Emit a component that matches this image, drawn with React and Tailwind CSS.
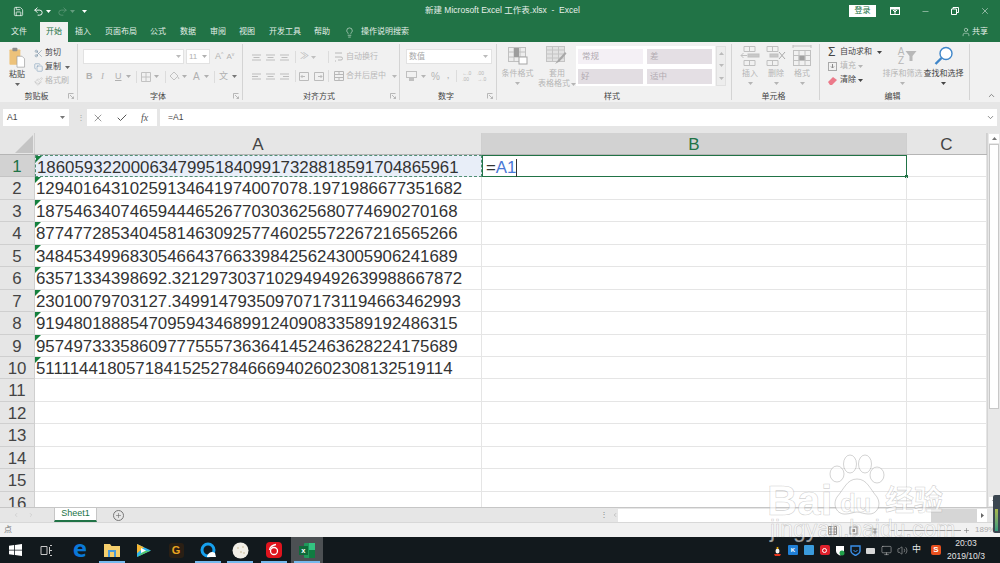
import React from "react";
import { Scissors, Copy, Paintbrush, Lightbulb, Minus, X, Check, ChevronDown, ChevronUp, ChevronLeft, ChevronRight, Plus, User, Save, Undo2, Redo2, Volume2, Monitor } from "lucide-react";

const rows = [
  "186059322000634799518409917328818591704865961",
  "12940164310259134641974007078.1971986677351682",
  "187546340746594446526770303625680774690270168",
  "877477285340458146309257746025572267216565266",
  "348453499683054664376633984256243005906241689",
  "63571334398692.3212973037102949492639988667872",
  "23010079703127.3499147935097071731194663462993",
  "919480188854709594346899124090833589192486315",
  "957497333586097775557363641452463628224175689",
  "511114418057184152527846669402602308132519114",
  "", "", "", "", "", "",
];

const Caret = ({ className = "" }) => (
  <svg width="5" height="3" viewBox="0 0 5 3" className={className}><path d="M0 0h5L2.5 3z" fill="currentColor" /></svg>
);

const Launcher = () => (
  <svg width="6" height="6" viewBox="0 0 6 6" className="text-[#a8a8a8]"><path d="M0.5 5.5V0.5H5.5M2 2L5.5 5.5M3.5 5.5H5.5V3.5" fill="none" stroke="currentColor" strokeWidth="0.8" /></svg>
);

function Group({ w, label, launcher, children, border = true }) {
  return (
    <div className={`flex flex-col h-[56px] mt-[2px] shrink-0 pt-[1px] ${border ? "border-r border-[#d4d4d4]" : ""}`} style={{ width: w }}>
      <div className="flex-1 flex min-h-0">{children}</div>
      <div className="h-[12px] -mb-[3px] flex items-center justify-center relative text-[8px] text-[#444] pr-1">
        {label}
        {launcher && <span className="absolute right-[3px] top-[2px]"><Launcher /></span>}
      </div>
    </div>
  );
}

const Lines = ({ kind, className = "" }) => {
  const x = kind === "l" ? [0, 9, 0, 6] : kind === "r" ? [0, 9, 3, 9] : [0, 9, 1.5, 7.5];
  return (
    <svg width="9" height="7" viewBox="0 0 9 7" className={`text-[#bdbdbd] ${className}`}>
      <path d={`M${x[0]} 1H${x[1]}M${x[2]} 3.5H${x[3]}M${x[0]} 6H${x[1]}`} stroke="currentColor" strokeWidth="1" fill="none" />
    </svg>
  );
};

const BigBtn = ({ w, icon, l1, l2, caret = true, color = "text-[#b5b5b5]" }) => (
  <div className={`flex flex-col items-center shrink-0 text-[8px] leading-[10px] ${color}`} style={{ width: w }}>
    <div className="h-[22px] flex items-center justify-center">{icon}</div>
    <div className="mt-[2px] whitespace-nowrap">{l1}</div>
    {l2 && <div className="whitespace-nowrap flex items-center gap-[1px]">{l2}<Caret /></div>}
    {!l2 && caret && <Caret className="mt-[3px]" />}
  </div>
);

const TableIcon = () => (
  <svg width="20" height="18" viewBox="0 0 20 18" className="text-[#c0c0c0]">
    <rect x="0.5" y="0.5" width="17" height="14" fill="#ededed" stroke="currentColor" />
    <path d="M6 1v14M12 1v14M1 5h16M1 10h16" stroke="currentColor" fill="none" />
    <rect x="6" y="1" width="5" height="9" fill="#9d9d9d" />
    <rect x="11" y="10" width="8" height="7" fill="#fff" stroke="#a5a5a5" />
  </svg>
);

const SheetFmtIcon = () => (
  <svg width="22" height="20" viewBox="0 0 22 20" className="text-[#c4c4c4]">
    <rect x="0.5" y="0.5" width="18" height="15" fill="#e2e2e2" stroke="currentColor" />
    <path d="M1 4h18M1 8h18M1 12h18M6.5 1v15M12.5 1v15" stroke="currentColor" fill="none" />
    <path d="M9 18l3-4 7-8 1.5 1.5-7 8z" fill="#a8a8a8" />
  </svg>
);

const CellsIcon = ({ kind }) => (
  <svg width="20" height="22" viewBox="0 0 20 22" className="text-[#c0c0c0]" fill="none" stroke="currentColor">
    {kind === "ins" && <><path d="M4 1.500h11v5H4zM9.500 1.500v5M4 15.500h11v5H4zM9.500 15.500v5" /><rect x="8" y="9" width="11" height="3" fill="#c8c8c8" /><path d="M7 10.500H1M3.500 8l-2.500 2.500 2.500 2.500" /></>}
    {kind === "del" && <><path d="M1 1.500h11v5H1zM6.500 1.500v5M1 15.500h11v5H1zM6.500 15.500v5" /><rect x="4" y="9" width="8" height="3" fill="#c8c8c8" /><path d="M13 7l6 7M19 7l-6 7" stroke="#a9a9a9" /></>}
    {kind === "fmt" && <><path d="M1 1h18M1 0v3M19 0v3" /><rect x="1.500" y="5.500" width="17" height="15" /><path d="M7 6v14M13 6v14M2 10.500h16M2 15.500h16" /><rect x="7" y="10.500" width="6" height="5" fill="#a0a0a0" /></>}
  </svg>
);

const GreyBtn = ({ children, className = "" }) => <span className={`text-[#b8b8b8] flex items-center whitespace-nowrap ${className}`}>{children}</span>;
const Sep = ({ className = "" }) => <span className={`w-[1px] h-[12px] bg-[#dcdcdc] shrink-0 ${className}`} />;

function Ribbon() {
  return (
    <div className="h-[60px] bg-[#f1f1f1] flex shrink-0">
      <Group w={78} label="剪贴板" launcher>
        <div className="w-[34px] shrink-0 flex flex-col items-center pt-[2px] text-[#444] text-[8px] leading-[10px]">
          <svg width="18" height="21" viewBox="0 0 20 25" className="mr-[1px]">
            <rect x="1" y="3" width="13" height="18" rx="1" fill="#edc27a" />
            <rect x="4.500" y="1" width="6" height="4" rx="1" fill="#8f8f8f" />
            <path d="M10 11h6l3 3v10h-9z" fill="#fff" stroke="#9a9a9a" strokeWidth="0.8" />
          </svg>
          <div className="mt-[2px]">粘贴</div>
          <Caret className="mt-[3px] text-[#666]" />
        </div>
        <div className="flex flex-col text-[8px] text-[#444] leading-[14px] pt-[1px]">
          <div className="flex items-center gap-[2px] h-[14px]"><Scissors size={9} strokeWidth={1.2} className="text-[#56748f]" />剪切</div>
          <div className="flex items-center gap-[2px] h-[14px]"><Copy size={9} strokeWidth={1.2} className="text-[#5f87ad]" />复制<Caret className="ml-[2px] text-[#666]" /></div>
          <div className="flex items-center gap-[2px] h-[14px] text-[#b5b5b5]"><Paintbrush size={9} strokeWidth={1.2} />格式刷</div>
        </div>
      </Group>

      <Group w={165} label="字体" launcher>
        <div className="flex flex-col pl-[5px] pt-[4px] w-full">
          <div className="flex items-center h-[15px]">
            <div className="w-[101px] h-[15px] bg-white border border-[#e2e2e2] flex items-center justify-end pr-[2px] text-[#bbb]"><Caret /></div>
            <div className="ml-[2px] w-[24px] h-[15px] bg-white border border-[#e2e2e2] flex items-center justify-between px-[2px] text-[8px] text-[#b0b0b0]">11<Caret /></div>
            <span className="ml-[5px] text-[9px] text-[#b0b0b0]">A<sup className="text-[5px]">^</sup></span>
            <span className="ml-[3px] text-[8px] text-[#b0b0b0]">A<sup className="text-[5px]">v</sup></span>
          </div>
          <div className="flex items-center h-[15px] mt-[5px] text-[9px] text-[#b0b0b0] pl-[3px]">
            <b className="w-[15px]" style={{ fontFamily: "Liberation Sans" }}>B</b>
            <i className="w-[14px]" style={{ fontFamily: "Liberation Serif" }}>I</i>
            <u className="w-[10px]">U</u>
            <Caret className="ml-[1px]" />
            <Sep className="ml-[5px] mr-[4px]" />
            <svg width="10" height="10" viewBox="0 0 10 10" className="text-[#c2c2c2]"><path d="M.5.5h9v9h-9zM5 .5v9M.5 5h9" fill="none" stroke="currentColor" /></svg>
            <Caret className="ml-[3px]" />
            <Sep className="ml-[6px] mr-[3px]" />
            <svg width="11" height="11" viewBox="0 0 11 11" className="text-[#c2c2c2]"><path d="M5 1l4 4-4 4-4-4zM9 6l1 2" fill="none" stroke="currentColor" /></svg>
            <Caret className="ml-[2px]" />
            <span className="ml-[6px] text-[10px] leading-none w-[7px]">A</span>
            <Caret className="ml-[4px]" />
            <Sep className="ml-[5px] mr-[4px]" />
            <span className="text-[9px]">文</span>
            <Caret className="ml-[4px] text-[#777]" />
          </div>
        </div>
      </Group>

      <Group w={157} label="对齐方式" launcher>
        <div className="flex flex-col pl-[9px] pt-[5px] w-full">
          <div className="flex items-center h-[14px]">
            <Lines kind="c" /><Lines kind="c" className="ml-[5px]" /><Lines kind="c" className="ml-[5px]" />
            <Sep className="ml-[6px]" />
            <GreyBtn className="text-[9px] ml-[4px] w-[9px]">≫</GreyBtn><Caret className="text-[#c0c0c0] ml-[2px]" />
            <Sep className="ml-[12px]" />
            <GreyBtn className="text-[8px] gap-[3px] ml-[5px]">
              <svg width="9" height="10" viewBox="0 0 9 10"><path d="M1 1h7M1 5h6a1.500 1.500 0 010 3H4M1 9h1" stroke="currentColor" fill="none" /></svg>自动换行
            </GreyBtn>
          </div>
          <div className="flex items-center h-[14px] mt-[5px]">
            <Lines kind="l" /><Lines kind="c" className="ml-[5px]" /><Lines kind="r" className="ml-[5px]" />
            <Sep className="ml-[6px]" />
            <svg width="10" height="9" viewBox="0 0 10 9" className="text-[#bbb] ml-[3px]"><path d="M.5.5h9v8h-9zM2 4.500h4M2 4.500l1.500-1.500M2 4.500l1.500 1.500" fill="none" stroke="currentColor" /></svg>
            <svg width="10" height="9" viewBox="0 0 10 9" className="text-[#bbb] ml-[5px]"><path d="M.5.5h9v8h-9zM8 4.500H4M8 4.500L6.500 3M8 4.500L6.500 6" fill="none" stroke="currentColor" /></svg>
            <Sep className="ml-[4px]" />
            <GreyBtn className="text-[8px] gap-[2px] ml-[5px]">
              <svg width="10" height="10" viewBox="0 0 10 10"><path d="M.5.5h9v9h-9zM.5 3.500h9M.5 6.500h9M5 .5v3M5 6.500v3" stroke="currentColor" fill="none" /></svg>合并后居中<Caret className="ml-[4px]" />
            </GreyBtn>
          </div>
        </div>
      </Group>

      <Group w={97} label="数字" launcher>
        <div className="flex flex-col pl-[6px] pt-[4px]">
          <div className="w-[86px] h-[15px] bg-white border border-[#e2e2e2] flex items-center justify-between pl-[2px] pr-[3px] text-[8px] text-[#a8a8a8]">数值<Caret className="text-[#bbb]" /></div>
          <div className="flex items-center h-[14px] mt-[5px] text-[#b5b5b5] text-[10px]">
            <svg width="12" height="11" viewBox="0 0 12 11" className="text-[#c0c0c0]"><rect x=".5" y=".5" width="10" height="6" fill="none" stroke="currentColor" /><rect x="3" y="7" width="5" height="3" fill="currentColor" /></svg>
            <Caret className="ml-[3px]" />
            <span className="ml-[5px]">%</span>
            <b className="ml-[7px] text-[8px]">,</b>
            <Sep className="ml-[7px] mr-[5px]" />
            <span className="text-[5px] leading-[6px] w-[14px]">←.0<br />.00</span>
            <span className="text-[5px] leading-[6px] ml-[1px]">.00<br />→.0</span>
          </div>
        </div>
      </Group>

      <Group w={235} label="样式">
        <BigBtn w={41} icon={<TableIcon />} l1="条件格式" />
        <BigBtn w={38} l2="表格格式" icon={<SheetFmtIcon />} l1="套用" />
        <div className="w-[139px] h-[40px] bg-white mt-[1px] grid grid-cols-[65px_65px] gap-x-[4px] gap-y-[4px] p-[2px] pt-[3px] text-[8.500px] text-[#b2abb2]">
          <div className="bg-[#f4f0f5] h-[15px] flex items-center pl-[4px]">常规</div>
          <div className="bg-[#e4dfe4] h-[15px] flex items-center pl-[3px]">差</div>
          <div className="bg-[#e2dde2] h-[15px] flex items-center pl-[3px]">好</div>
          <div className="bg-[#e4dfe4] h-[15px] flex items-center pl-[3px]">适中</div>
        </div>
        <div className="w-[10px] h-[40px] mt-[1px] ml-[1px] flex flex-col border border-[#e0e0e0] bg-[#ededed] text-[#bbb] items-center justify-around"><Caret className="rotate-180" /><Caret /><Caret /></div>
      </Group>

      <Group w={88} label="单元格">
        <div className="w-[5px]" />
        <BigBtn w={26} icon={<CellsIcon kind="ins" />} l1="插入" />
        <BigBtn w={26} icon={<CellsIcon kind="del" />} l1="删除" />
        <BigBtn w={26} icon={<CellsIcon kind="fmt" />} l1="格式" />
      </Group>

      <Group w={150} label="编辑">
        <div className="w-[62px] shrink-0 flex flex-col pl-[8px] text-[8px] text-[#444]">
          <div className="flex items-center h-[14px]"><span className="text-[12px] w-[12px] leading-none">Σ</span>自动求和<Caret className="ml-[5px]" /></div>
          <div className="flex items-center h-[14px] text-[#b5b5b5]"><svg width="9" height="9" viewBox="0 0 9 9" className="mr-[3px]"><rect x=".5" y=".5" width="8" height="8" fill="none" stroke="#a9a9a9" /><path d="M4.500 2v4M3 4.500l1.500 1.500 1.500-1.500" stroke="#8a8a8a" fill="none" /></svg>填充<Caret className="ml-[2px]" /></div>
          <div className="flex items-center h-[14px]"><svg width="9" height="9" viewBox="0 0 9 9" className="mr-[3px]"><path d="M0 6l5-5 4 3-5 5H2z" fill="#ec7a8a" /></svg>清除<Caret className="ml-[2px]" /></div>
        </div>
        <BigBtn w={41} icon={
          <div className="flex items-center text-[#b8b8b8] gap-[1px] ml-[10px]">
            <div className="text-[10px] leading-[9px] flex flex-col items-center"><span>A</span><span>Z</span></div>
            <svg width="12" height="10" viewBox="0 0 11 10"><path d="M0 0h11L7 5v5H4V5z" fill="currentColor" /></svg>
          </div>
        } l1="排序和筛选" />
        <BigBtn w={41} color="text-[#444]" icon={
          <svg width="20" height="20" viewBox="0 0 20 20"><circle cx="12" cy="7.500" r="6" fill="#fff" stroke="#3f86c9" strokeWidth="1.400" /><path d="M7.500 12l-6 6" stroke="#3f86c9" strokeWidth="2.400" /></svg>
        } l1="查找和选择" />
      </Group>

      <div className="flex-1 flex items-end justify-end pb-[2px] pr-[4px] text-[#666]"><ChevronUp size={9} /></div>
    </div>
  );
}

function TitleBar() {
  return (
    <div className="h-[22px] flex items-center text-white shrink-0 relative pl-[13px]">
      <Save size={11} strokeWidth={1.6} />
      <Undo2 size={11} strokeWidth={2} className="ml-[9px]" />
      <Caret className="ml-[2px]" />
      <Redo2 size={11} strokeWidth={1.600} className="ml-[6px] opacity-30" />
      <Caret className="ml-[2px] opacity-30" />
      <Caret className="ml-[7px]" />
      <div className="absolute left-[425px] top-[4px] text-[8.500px] leading-[12px] whitespace-nowrap text-[#e6efe9]">新建 Microsoft Excel 工作表.xlsx&nbsp; -&nbsp; Excel</div>
      <div className="ml-auto flex items-center">
        <div className="w-[27px] h-[12px] bg-white text-[#217346] text-[8px] leading-[12px] text-center">登录</div>
        <svg width="10" height="8" viewBox="0 0 10 8" className="ml-[14px]"><rect x=".5" y=".5" width="9" height="7" fill="none" stroke="#fff" /><path d="M5 1v6M3 3l2 2 2-2" stroke="#fff" fill="none" /><rect x=".5" y=".5" width="9" height="2" fill="#fff" /></svg>
        <Minus size={9} strokeWidth={1.200} className="ml-[21px]" />
        <svg width="8" height="8" viewBox="0 0 8 8" className="ml-[21px]"><path d="M.5 2h5v5.500h-5zM2 2V.5h5.500v5H5.500" fill="none" stroke="#fff" /></svg>
        <X size={10} strokeWidth={1.200} className="ml-[21px] mr-[10px]" />
      </div>
    </div>
  );
}

function TabBar() {
  return (
    <div className="h-[20px] flex items-end text-[8px] text-[#e4efe8] shrink-0">
      <span className="ml-[11px] mb-[4px] w-[16px]">文件</span>
      <span className="ml-[13px] w-[28px] h-[20px] bg-[#f1f1f1] text-[#217346] flex items-center justify-center">开始</span>
      <span className="ml-[7px] mb-[4px]">插入</span>
      <span className="ml-[14px] mb-[4px]">页面布局</span>
      <span className="ml-[13px] mb-[4px]">公式</span>
      <span className="ml-[14px] mb-[4px]">数据</span>
      <span className="ml-[14px] mb-[4px]">审阅</span>
      <span className="ml-[13px] mb-[4px]">视图</span>
      <span className="ml-[14px] mb-[4px]">开发工具</span>
      <span className="ml-[13px] mb-[4px]">帮助</span>
      <Lightbulb size={11} strokeWidth={1.300} className="ml-[14px] mb-[4px]" />
      <span className="ml-[6px] mb-[4px]">操作说明搜索</span>
      <span className="ml-auto mb-[4px] mr-[12px] flex items-center gap-[1px]"><User size={10} strokeWidth={1.300} />共享</span>
    </div>
  );
}

function FormulaBar() {
  return (
    <div className="h-[31px] bg-[#e6e6e6] flex items-center pl-[3px] pr-[3px] shrink-0 text-[8.500px] text-[#444]">
      <div className="w-[66px] h-[17px] bg-white flex items-center justify-between pl-[4px] pr-[4px]">A1<Caret className="text-[#777]" /></div>
      <span className="ml-[8px] w-[3px] text-[#a5a5a5] text-[8px] leading-[4px]">⋮</span>
      <div className="ml-[7px] w-[70px] h-[17px] bg-white flex items-center text-[#555]">
        <X size={12} strokeWidth={1.200} className="ml-[5px]" />
        <Check size={12} strokeWidth={2} className="ml-[12px]" />
        <span className="italic text-[10px] ml-[13px]" style={{ fontFamily: "Liberation Serif" }}>fx</span>
      </div>
      <div className="ml-[3px] flex-1 h-[17px] bg-white flex items-center justify-between pl-[8px] pr-[2px]">=A1<ChevronDown size={9} strokeWidth={2} className="text-[#666]" /></div>
    </div>
  );
}

const Tri = () => (
  <svg width="6" height="6" viewBox="0 0 6 6" className="absolute left-0 top-0"><path d="M0 0h6L0 6z" fill="#15803d" /></svg>
);

function Sheet() {
  return (
    <div className="flex flex-1 min-h-0 bg-white">
      <div className="flex-1 flex flex-col min-w-0 overflow-hidden">
        <div className="h-[22px] flex shrink-0 text-[17px] leading-[24px] text-center text-[#444] bg-[#e6e6e6] border-b border-[#b5b5b5]">
          <div className="w-[35px] relative border-r border-[#cfcfcf]">
            <svg width="18" height="18" viewBox="0 0 18 18" className="absolute right-[1px] bottom-[1px]"><path d="M18 0v18H0z" fill="#c4c4c4" /></svg>
          </div>
          <div className="w-[447px] border-r border-[#cfcfcf]">A</div>
          <div className="w-[425px] bg-[#d2d2d2] text-[#217346] border-r border-[#cfcfcf]">B</div>
          <div className="flex-1 border-r border-[#cfcfcf]">C</div>
        </div>
        {rows.map((t, i) => {
          const first = i === 0;
          return (
            <div key={i} className="h-[22.45px] shrink-0 flex text-[16.850px] leading-[24px] text-[#333]" style={{ fontFamily: "Liberation Sans" }}>
              <div className={`w-[35px] shrink-0 text-center border-b border-r ${first ? "bg-[#d2d2d2] text-[#217346] border-[#c4c4c4]" : "bg-[#e6e6e6] border-[#cfcfcf] text-[#444]"}`}>{i + 1}</div>
              <div className={`w-[447px] shrink-0 relative pl-[1px] whitespace-nowrap border-b border-r ${first ? "bg-[#e8eef8] border-dashed border-[#4f8f74] border-t border-l" : "border-[#e5e5e5]"}`}>
                {t}
                {t && <Tri />}
              </div>
              <div className={`w-[425px] shrink-0 relative pl-[3px] border-b border-r ${first ? "border-[#217346] border-t border-l" : "border-[#e5e5e5]"}`}>
                {first && <span className="inline-flex items-center h-[20px]">=<span className="text-[#4a78d6]">A1</span><span className="w-[1px] h-[18px] bg-[#333]" /></span>}
                {first && <span className="absolute -right-[2px] -bottom-[2px] w-[3px] h-[3px] bg-[#217346]" />}
              </div>
              <div className="flex-1 border-b border-r border-[#e5e5e5]" />
            </div>
          );
        })}
      </div>
      <div className="w-[13px] shrink-0 bg-[#e8e8e8] flex flex-col items-center pt-[1px] pb-[1px] border-l border-[#d4d4d4]">
        <div className="w-[10px] h-[9px] bg-white flex items-center justify-center text-[#777]"><Caret className="rotate-180" /></div>
        <div className="w-[10px] h-[265px] bg-white border border-[#c8c8c8] mt-[1px]" />
        <div className="mt-auto w-[10px] h-[9px] bg-white flex items-center justify-center text-[#777]"><Caret /></div>
      </div>
    </div>
  );
}

function SheetTabs() {
  return (
    <div className="h-[15px] bg-[#e6e6e6] flex items-stretch shrink-0 border-t border-[#c6c6c6] relative">
      <div className="w-[54px] flex items-center pl-[13px] gap-[9px] text-[#bbb]"><ChevronLeft size={6} strokeWidth={2} /><ChevronRight size={6} strokeWidth={2} /></div>
      <div className="w-[43px] h-[14px] bg-white border-b-2 border-[#217346] border-x border-x-[#c6c6c6] text-[#217346] text-[9px] leading-[11px] text-center">Sheet1</div>
      <div className="ml-[16px] flex items-center">
        <span className="w-[11px] h-[11px] rounded-full border border-[#777] flex items-center justify-center text-[#666]"><Plus size={7} strokeWidth={2} /></span>
      </div>
      <div className="ml-auto flex items-center w-[400px]">
        <span className="text-[#888] text-[8px] w-[12px]">⋮</span>
        <span className="w-[6px] text-[#999]"><ChevronLeft size={6} /></span>
        <div className="w-[313px] h-[13px] bg-white" />
        <div className="w-[46px] h-[13px] bg-[#d6d6d6]" />
        <div className="w-[10px] h-[13px] bg-white flex items-center justify-center text-[#666]"><Caret className="-rotate-90" /></div>
        <div className="flex-1" />
      </div>
    </div>
  );
}

function StatusBar() {
  return (
    <div className="h-[15px] bg-[#f1f1f1] flex items-center shrink-0 border-t border-[#d8d8d8] pl-[4px] text-[#777]">
      <span className="text-[8px]">点</span>
      <div className="ml-auto flex items-center pr-[1px] text-[8px]">
        <svg width="9" height="9" viewBox="0 0 9 9"><path d="M.5.5h8v8h-8zM3 1v7M6 1v7M1 3h7M1 6h7" stroke="#888" fill="none" /></svg>
        <svg width="9" height="9" viewBox="0 0 9 9" className="ml-[12px]"><rect x="1" y="1" width="7" height="7" fill="none" stroke="#888" /><rect x="3" y="3" width="3" height="3" fill="#888" /></svg>
        <svg width="9" height="9" viewBox="0 0 9 9" className="ml-[11px]"><path d="M.5 3h8M3 .5v8M3 6h5.500M6 3v5.500" stroke="#888" fill="none" /></svg>
        <Minus size={7} className="ml-[11px]" />
        <div className="w-[63px] h-[1px] bg-[#9a9a9a] mx-[2px]" />
        <Plus size={7} strokeWidth={2} />
        <span className="ml-[5px] w-[24px] whitespace-nowrap text-[#aaa]">189%</span>
      </div>
    </div>
  );
}

const TaskSlot = ({ children, active, bar, className = "" }) => (
  <div className={`w-[32px] h-[26px] flex items-center justify-center relative shrink-0 ${active ? "bg-[#4c5053]" : ""} ${className}`}>
    {children}
    {bar && <span className="absolute bottom-0 left-[3px] right-[3px] h-[2px] bg-[#76b9ed]" />}
  </div>
);

function Taskbar() {
  return (
    <div className="h-[26px] bg-[#12191d] flex items-center shrink-0 text-white">
      <TaskSlot>
        <svg width="13" height="12" viewBox="0 0 13 12" className="-ml-[2px]"><path d="M0 1.700L5.200 1v4.700H0zM6 .9L13 0v5.700H6zM0 6.400h5.200v4.700L0 10.300zM6 6.400h7V12l-7-.9z" fill="#fff" /></svg>
      </TaskSlot>
      <TaskSlot>
        <svg width="13" height="11" viewBox="0 0 13 11" fill="none" stroke="#c8c8c8" className="-ml-[4px]"><path d="M1 1.500h6v8H1zM10 .5h2M10 5.500h2M10 10.500h2M9.500 2v7" /></svg>
      </TaskSlot>
      <TaskSlot>
        <span className="text-[24px] leading-none font-bold text-[#0a78d7] -mt-[4px]" style={{ fontFamily: "Noto Sans" }}>e</span>
      </TaskSlot>
      <TaskSlot bar>
        <svg width="16" height="14" viewBox="0 0 16 14"><path d="M0 1h6l1.500 2H16v11H0z" fill="#f5ce6c" /><rect x="4" y="7" width="8" height="7" fill="#4a9ad8" /><rect x="6" y="9" width="4" height="5" fill="#f5ce6c" /></svg>
      </TaskSlot>
      <TaskSlot>
        <svg width="16" height="15" viewBox="0 0 16 15"><path d="M1 1l14 6.500L1 14z" fill="#2fb5f0" /><path d="M1 1l7 3.300-7 6z" fill="#f7b733" /><path d="M1 14l7-6 7-.5z" fill="#56c76b" /><path d="M5 5l5 2.500-5 2.500z" fill="#fff" /></svg>
      </TaskSlot>
      <TaskSlot>
        <div className="w-[15px] h-[15px] bg-[#2a1f14] rounded-[3px] flex items-center justify-center text-[#e8a520] text-[11px] font-bold leading-none">G</div>
      </TaskSlot>
      <TaskSlot bar>
        <svg width="17" height="17" viewBox="0 0 17 17"><circle cx="8" cy="8" r="6" fill="none" stroke="#16a0ee" strokeWidth="3" /><path d="M7 14c2-4 5-5 8-3l1 4H7z" fill="#fff" /></svg>
      </TaskSlot>
      <TaskSlot bar>
        <svg width="17" height="17" viewBox="0 0 17 17"><circle cx="8.500" cy="8.500" r="8" fill="#f2efe7" /><circle cx="6" cy="6" r=".7" fill="#b9a77a" /><circle cx="11" cy="5" r=".7" fill="#b9a77a" /><circle cx="9" cy="10" r=".7" fill="#b9a77a" /><circle cx="12" cy="11" r=".7" fill="#b9a77a" /></svg>
      </TaskSlot>
      <TaskSlot bar className="ml-[2px]">
        <svg width="16" height="16" viewBox="0 0 16 16"><rect width="16" height="16" rx="4" fill="#e0141e" /><circle cx="8" cy="9" r="3.500" fill="none" stroke="#fff" strokeWidth="1.300" /><path d="M10 2.500C7 3 4 5 3.500 8" fill="none" stroke="#fff" strokeWidth="1.300" /></svg>
      </TaskSlot>
      <TaskSlot active bar className="ml-[1px]">
        <svg width="16" height="15" viewBox="0 0 16 15"><rect x="5" y="0" width="11" height="15" rx="1" fill="#1f9a5b" /><rect x="10" y="0" width="6" height="7" fill="#33c481" /><rect x="10" y="7" width="6" height="8" fill="#107c41" /><rect x="0" y="3" width="9" height="9" fill="#0f6b3a" /><text x="2.200" y="10.200" fontSize="7.500" fontWeight="700" fill="#fff" fontFamily="Liberation Sans">x</text></svg>
      </TaskSlot>
      <div className="ml-auto flex items-center h-full">
        <svg width="9" height="11" viewBox="0 0 9 11" className="mr-[6px]"><ellipse cx="4.500" cy="5" rx="3" ry="4.500" fill="#1c1c1c" /><ellipse cx="4.500" cy="6" rx="2" ry="2.500" fill="#f4f4f4" /><path d="M1 9h7l-1 2H2z" fill="#e8341c" /><circle cx="4.500" cy="3" r="1" fill="#f5b400" /></svg>
        <div className="w-[10px] h-[10px] bg-[#1f7fd6] rounded-[1px] text-[6px] leading-[10px] text-center font-bold mr-[6px]">K</div>
        <div className="w-[10px] h-[10px] bg-[#3a9bdc] rounded-[1px] mr-[6px]" />
        <div className="w-[10px] h-[10px] bg-[#e0202c] rounded-[2px] mr-[5px] flex items-center justify-center"><span className="w-[5px] h-[5px] rounded-full border border-white" /></div>
        <svg width="10" height="11" viewBox="0 0 10 11" className="mr-[5px]"><path d="M1 1h8v5c0 2-2 3.500-4 4.500C3 9.500 1 8 1 6z" fill="#fff" /><circle cx="7" cy="8" r="2.500" fill="#22a04a" /></svg>
        <svg width="11" height="11" viewBox="0 0 11 11" className="mr-[5px]"><path d="M1 1h9v5c0 2-2.500 3.500-4.500 4.500C3.500 9.500 1 8 1 6z" fill="none" stroke="#3a8fe8" strokeWidth="1.400" /><path d="M3.500 5l2 2 2-2" fill="none" stroke="#3a8fe8" /></svg>
        <svg width="10" height="7" viewBox="0 0 10 7" className="mr-[5px]"><rect y="1" width="9" height="6" rx="1" fill="#d8d8d8" /></svg>
        <Monitor size={11} strokeWidth={1.100} className="text-[#cfcfcf] mr-[5px]" />
        <Volume2 size={11} strokeWidth={1.100} className="text-[#cfcfcf] mr-[4px]" />
        <span className="text-[9px] mr-[10px] text-[#e8e8e8]">中</span>
        <div className="w-[10px] h-[10px] bg-[#e8501e] rounded-[2px] text-[8px] leading-[10px] text-center font-bold">S</div>
        <div className="w-[50px] text-center text-[8.500px] leading-[13px] mr-[9px] text-[#e4e4e4]">20:03<br />2019/10/3</div>
      </div>
    </div>
  );
}

function Watermark() {
  const stroke = { WebkitTextStroke: "0.6px rgba(120,120,120,0.35)", color: "rgba(255,255,255,0.6)", fontFamily: "Liberation Sans" };
  return (
    <div className="absolute left-[765px] top-[452px] w-[185px] h-[96px] pointer-events-none">
      <svg width="60" height="68" viewBox="0 0 60 68" className="absolute left-[62px] top-0">
        <g fill="rgba(255,255,255,0.55)" stroke="rgba(130,130,130,0.35)">
          <ellipse cx="10" cy="22" rx="7" ry="8" />
          <ellipse cx="23" cy="12" rx="6.500" ry="9" />
          <ellipse cx="38" cy="12" rx="6.500" ry="9" />
          <ellipse cx="50" cy="23" rx="7" ry="8" />
          <path d="M30 27c10 0 13 10 20 18 5 8 0 18-9 17-4 0-8-2-11-2s-7 2-11 2C10 63 5 53 10 45c7-8 10-18 20-18z" />
        </g>
      </svg>
      <div className="absolute left-[2px] top-[27px] text-[42px] leading-[44px] font-bold" style={stroke}>Bai</div>
      <div className="absolute left-[75px] top-[37px] text-[26px] leading-[28px] font-bold tracking-tight" style={{ ...stroke, color: "rgba(255,255,255,0.3)" }}>du</div>
      <div className="absolute left-[120px] top-[30px] text-[29px] leading-[32px] font-bold whitespace-nowrap" style={{ ...stroke, fontFamily: "Noto Sans CJK SC" }}>经验</div>
      <div className="absolute left-[5px] top-[64px] text-[23px] leading-[26px] whitespace-nowrap" style={stroke}>jingyan.baidu.com</div>
    </div>
  );
}

export default function App() {
  return (
    <div className="w-[1000px] h-[563px] relative overflow-hidden flex flex-col bg-[#217346]" style={{ fontFamily: '"Liberation Sans","Noto Sans CJK SC",sans-serif' }}>
      <TitleBar />
      <TabBar />
      <Ribbon />
      <FormulaBar />
      <Sheet />
      <SheetTabs />
      <StatusBar />
      <Taskbar />
      <Watermark />
      <div className="absolute left-[993px] top-[495px] w-[7px] h-[38px] rounded-l-[2px] bg-[#3b4650] flex items-end">
        <div className="w-[3px] ml-[2px] mb-[2px] h-[22px] bg-gradient-to-b from-[#a8b84a] to-[#2f9a7c]" />
      </div>
    </div>
  );
}
